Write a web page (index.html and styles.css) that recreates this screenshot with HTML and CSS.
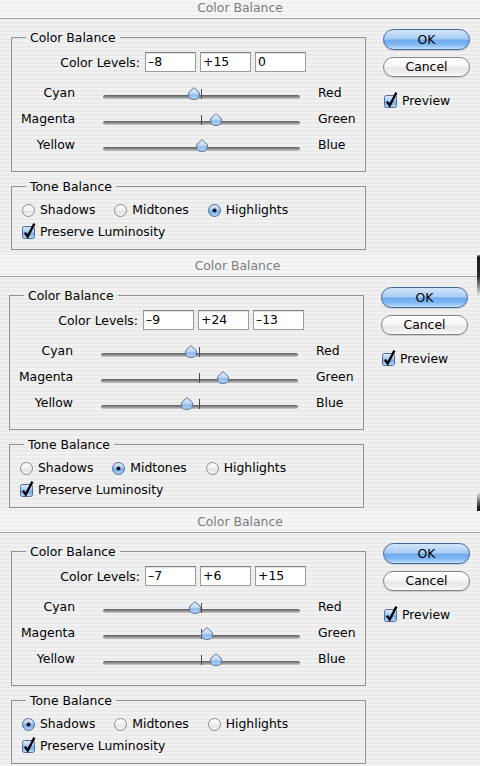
FILE: index.html
```html
<!DOCTYPE html>
<html lang="en">
<head>
<meta charset="utf-8">
<title>Color Balance</title>
<link rel="stylesheet" href="styles.css">
</head>
<body>
<svg class="defs" aria-hidden="true">
  <defs>
    <linearGradient id="gBlue" x1="0" y1="0" x2="0" y2="1">
      <stop offset="0" stop-color="#e2eefb"/>
      <stop offset="0.45" stop-color="#a8cbf2"/>
      <stop offset="0.55" stop-color="#74a9ea"/>
      <stop offset="1" stop-color="#b9daf9"/>
    </linearGradient>
    <linearGradient id="gOff" x1="0" y1="0" x2="0" y2="1">
      <stop offset="0" stop-color="#ffffff"/>
      <stop offset="0.5" stop-color="#f0f0f0"/>
      <stop offset="0.6" stop-color="#e2e2e2"/>
      <stop offset="1" stop-color="#fafafa"/>
    </linearGradient>
    <linearGradient id="gThumb" x1="0" y1="0" x2="0" y2="1">
      <stop offset="0" stop-color="#eef4fc"/>
      <stop offset="0.5" stop-color="#bcd5f3"/>
      <stop offset="0.62" stop-color="#8fb8ea"/>
      <stop offset="1" stop-color="#bcd9f7"/>
    </linearGradient>
    <g id="thumbShape">
      <path d="M6 0.6 L11.4 5.6 V8.6 C11.4 11.4 9.2 12.4 6 12.4 C2.8 12.4 0.6 11.4 0.6 8.6 V5.6 Z" fill="url(#gThumb)" stroke="#5a6f96" stroke-width="1"/>
    </g>
    <g id="radioOff">
      <circle cx="6.5" cy="6.5" r="6" fill="url(#gOff)" stroke="#8b8b8b"/>
    </g>
    <g id="radioOn">
      <circle cx="6.5" cy="6.5" r="6" fill="url(#gBlue)" stroke="#4d6c9f"/>
      <circle cx="6.5" cy="6.5" r="2" fill="#111"/>
    </g>
    <g id="checkOn">
      <rect x="0.5" y="0.5" width="12" height="12" rx="2" fill="url(#gBlue)" stroke="#4d6c9f"/>
      <path d="M2.9 6.6 L5.7 10.6 L12.4 -2.4" fill="none" stroke="#000" stroke-width="2.3" stroke-linejoin="miter"/>
    </g>
  </defs>
</svg>

<div class="dialog dialog--first">
  <div class="titlebar titlebar--short">Color Balance</div>
  <div class="panel">
    <div class="main">
      <fieldset class="group group--balance">
        <legend>Color Balance</legend>
        <div class="levels">
          <span class="levels-label">Color Levels:</span>
          <span class="field">–8</span>
          <span class="field">+15</span>
          <span class="field">0</span>
        </div>
        <div class="sliders">
          <div class="slider-row">
            <span class="slider-left">Cyan</span>
            <div class="slider"><div class="track"></div><span class="tick"></span><svg class="thumb" style="left:46%" viewBox="0 0 12 13"><use href="#thumbShape"/></svg></div>
            <span class="slider-right">Red</span>
          </div>
          <div class="slider-row">
            <span class="slider-left">Magenta</span>
            <div class="slider"><div class="track"></div><span class="tick"></span><svg class="thumb" style="left:57.5%" viewBox="0 0 12 13"><use href="#thumbShape"/></svg></div>
            <span class="slider-right">Green</span>
          </div>
          <div class="slider-row">
            <span class="slider-left">Yellow</span>
            <div class="slider"><div class="track"></div><span class="tick"></span><svg class="thumb" style="left:50%" viewBox="0 0 12 13"><use href="#thumbShape"/></svg></div>
            <span class="slider-right">Blue</span>
          </div>
        </div>
      </fieldset>
      <fieldset class="group group--tone">
        <legend>Tone Balance</legend>
        <div class="radios">
          <span class="option"><svg class="mark" viewBox="0 0 13 13"><use href="#radioOff"/></svg>Shadows</span>
          <span class="option"><svg class="mark" viewBox="0 0 13 13"><use href="#radioOff"/></svg>Midtones</span>
          <span class="option"><svg class="mark" viewBox="0 0 13 13"><use href="#radioOn"/></svg>Highlights</span>
        </div>
        <div class="option preserve"><svg class="mark" viewBox="0 0 13 13"><use href="#checkOn"/></svg>Preserve Luminosity</div>
      </fieldset>
    </div>
    <div class="side">
      <div class="btn btn--default">OK</div>
      <div class="btn btn--cancel">Cancel</div>
      <div class="option preview"><svg class="mark" viewBox="0 0 13 13"><use href="#checkOn"/></svg>Preview</div>
    </div>
  </div>
</div>

<div class="dialog dialog--shifted">
  <div class="titlebar">Color Balance</div>
  <div class="panel">
    <div class="main">
      <fieldset class="group group--balance">
        <legend>Color Balance</legend>
        <div class="levels">
          <span class="levels-label">Color Levels:</span>
          <span class="field">–9</span>
          <span class="field">+24</span>
          <span class="field">–13</span>
        </div>
        <div class="sliders">
          <div class="slider-row">
            <span class="slider-left">Cyan</span>
            <div class="slider"><div class="track"></div><span class="tick"></span><svg class="thumb" style="left:45.5%" viewBox="0 0 12 13"><use href="#thumbShape"/></svg></div>
            <span class="slider-right">Red</span>
          </div>
          <div class="slider-row">
            <span class="slider-left">Magenta</span>
            <div class="slider"><div class="track"></div><span class="tick"></span><svg class="thumb" style="left:62%" viewBox="0 0 12 13"><use href="#thumbShape"/></svg></div>
            <span class="slider-right">Green</span>
          </div>
          <div class="slider-row">
            <span class="slider-left">Yellow</span>
            <div class="slider"><div class="track"></div><span class="tick"></span><svg class="thumb" style="left:43.5%" viewBox="0 0 12 13"><use href="#thumbShape"/></svg></div>
            <span class="slider-right">Blue</span>
          </div>
        </div>
      </fieldset>
      <fieldset class="group group--tone">
        <legend>Tone Balance</legend>
        <div class="radios">
          <span class="option"><svg class="mark" viewBox="0 0 13 13"><use href="#radioOff"/></svg>Shadows</span>
          <span class="option"><svg class="mark" viewBox="0 0 13 13"><use href="#radioOn"/></svg>Midtones</span>
          <span class="option"><svg class="mark" viewBox="0 0 13 13"><use href="#radioOff"/></svg>Highlights</span>
        </div>
        <div class="option preserve"><svg class="mark" viewBox="0 0 13 13"><use href="#checkOn"/></svg>Preserve Luminosity</div>
      </fieldset>
    </div>
    <div class="side">
      <div class="btn btn--default">OK</div>
      <div class="btn btn--cancel">Cancel</div>
      <div class="option preview"><svg class="mark" viewBox="0 0 13 13"><use href="#checkOn"/></svg>Preview</div>
    </div>
  </div>
</div>

<div class="dialog dialog--last">
  <div class="titlebar">Color Balance</div>
  <div class="panel">
    <div class="main">
      <fieldset class="group group--balance">
        <legend>Color Balance</legend>
        <div class="levels">
          <span class="levels-label">Color Levels:</span>
          <span class="field">–7</span>
          <span class="field">+6</span>
          <span class="field">+15</span>
        </div>
        <div class="sliders">
          <div class="slider-row">
            <span class="slider-left">Cyan</span>
            <div class="slider"><div class="track"></div><span class="tick"></span><svg class="thumb" style="left:46.5%" viewBox="0 0 12 13"><use href="#thumbShape"/></svg></div>
            <span class="slider-right">Red</span>
          </div>
          <div class="slider-row">
            <span class="slider-left">Magenta</span>
            <div class="slider"><div class="track"></div><span class="tick"></span><svg class="thumb" style="left:53%" viewBox="0 0 12 13"><use href="#thumbShape"/></svg></div>
            <span class="slider-right">Green</span>
          </div>
          <div class="slider-row">
            <span class="slider-left">Yellow</span>
            <div class="slider"><div class="track"></div><span class="tick"></span><svg class="thumb" style="left:57.5%" viewBox="0 0 12 13"><use href="#thumbShape"/></svg></div>
            <span class="slider-right">Blue</span>
          </div>
        </div>
      </fieldset>
      <fieldset class="group group--tone">
        <legend>Tone Balance</legend>
        <div class="radios">
          <span class="option"><svg class="mark" viewBox="0 0 13 13"><use href="#radioOn"/></svg>Shadows</span>
          <span class="option"><svg class="mark" viewBox="0 0 13 13"><use href="#radioOff"/></svg>Midtones</span>
          <span class="option"><svg class="mark" viewBox="0 0 13 13"><use href="#radioOff"/></svg>Highlights</span>
        </div>
        <div class="option preserve"><svg class="mark" viewBox="0 0 13 13"><use href="#checkOn"/></svg>Preserve Luminosity</div>
      </fieldset>
    </div>
    <div class="side">
      <div class="btn btn--default">OK</div>
      <div class="btn btn--cancel">Cancel</div>
      <div class="option preview"><svg class="mark" viewBox="0 0 13 13"><use href="#checkOn"/></svg>Preview</div>
    </div>
  </div>
</div>
</body>
</html>
```

FILE: styles.css
```css
* { box-sizing: border-box; }

html, body {
  margin: 0;
  padding: 0;
  overflow: hidden;
}

body {
  width: 480px;
  height: 766px;
  font-family: "DejaVu Sans", "Liberation Sans", sans-serif;
  font-size: 12.4px;
  color: #000;
  background: repeating-linear-gradient(to bottom, #f1f1f1 0 2px, #eaeaea 2px 4px);
}

.defs {
  display: block;
  width: 0;
  height: 0;
  overflow: hidden;
}

/* dialog frames */
.dialog { height: 256px; }
.dialog--first { height: 255px; }
.dialog--last { height: auto; }
.dialog--shifted {
  margin-left: -2px;
  border-right: 3px solid transparent;
  border-image: linear-gradient(to bottom, transparent 0, #1b1b1b 3px, #2a2a2a 22px, transparent 42px, transparent 236px, #1b1b1b 252px, #1b1b1b 256px) 1;
}

.titlebar {
  height: 22px;
  line-height: 21px;
  text-align: center;
  color: #7c7c7c;
  border-bottom: 1px solid #a6a6a6;
  background: repeating-linear-gradient(to bottom, #f6f6f6 0 2px, #f0f0f0 2px 4px);
}
.titlebar--short {
  height: 19px;
  line-height: 16px;
}

.panel {
  display: flex;
  align-items: flex-start;
  gap: 17px;
  padding: 10px 0 0 11px;
}

.main { width: 355px; }

.side {
  width: 87px;
  display: flex;
  flex-direction: column;
}

/* group boxes */
.group {
  margin: 0;
  padding: 0;
  min-width: 0;
  border: 1px solid #929292;
}
.group legend {
  margin-left: 14px;
  padding: 0 4px;
  height: 17px;
  line-height: 17px;
}
.group--balance { padding: 6px 0 13px; }
.group--tone {
  margin-top: 6px;
  padding: 7px 0 9px;
}

/* color levels */
.levels {
  display: flex;
  align-items: center;
  height: 20px;
}
.levels-label {
  width: 128px;
  margin-right: 5px;
  text-align: right;
}
.field {
  width: 51px;
  height: 20px;
  margin-right: 4px;
  padding-left: 2px;
  line-height: 18px;
  background: #fff;
  border: 1px solid #9c9c9c;
  border-top-color: #7d7d7d;
  box-shadow: inset 0 1px 1px rgba(0, 0, 0, 0.12);
}

/* sliders */
.sliders { margin-top: 8px; }
.slider-row {
  display: flex;
  height: 26px;
  line-height: 26px;
}
.slider-left {
  width: 63px;
  text-align: right;
}
.slider {
  position: relative;
  width: 197px;
  margin-left: 28px;
}
.track {
  margin-top: 15px;
  height: 4px;
  border-radius: 2px;
  background: linear-gradient(to bottom, #5d5d5d, #8e8e8e 50%, #cdcdcd);
}
.tick {
  position: absolute;
  left: 98px;
  top: 9px;
  width: 1px;
  height: 10px;
  background: #4a4a4a;
}
.thumb {
  position: absolute;
  top: 7px;
  width: 12px;
  height: 13px;
  margin-left: -6px;
}
.slider-right { margin-left: 18px; }

/* radios and checkboxes */
.option {
  display: flex;
  align-items: center;
  gap: 5px;
  height: 16px;
  line-height: 16px;
}
.mark {
  width: 13px;
  height: 13px;
  flex: none;
  overflow: visible;
}
.radios {
  display: flex;
  gap: 19px;
  margin-left: 10px;
}
.preserve {
  margin-top: 6px;
  margin-left: 10px;
}

/* buttons */
.btn {
  height: 21px;
  line-height: 19px;
  text-align: center;
  border-radius: 11px;
  border: 1px solid #858585;
  background: linear-gradient(to bottom, #ffffff 0, #f7f7f7 45%, #e6e6e6 55%, #eeeeee 80%, #fbfbfb 100%);
  box-shadow: 0 1px 1px rgba(0, 0, 0, 0.15);
}
.btn--default {
  border-color: #46659c;
  background: linear-gradient(to bottom, #d2e6fa 0, #a9cdf4 45%, #70a9ec 55%, #80b9f3 78%, #c3e1fc 100%);
}
.btn--cancel {
  height: 20px;
  line-height: 18px;
  margin-top: 7px;
}
.preview {
  margin-top: 16px;
  margin-left: 1px;
}
```
